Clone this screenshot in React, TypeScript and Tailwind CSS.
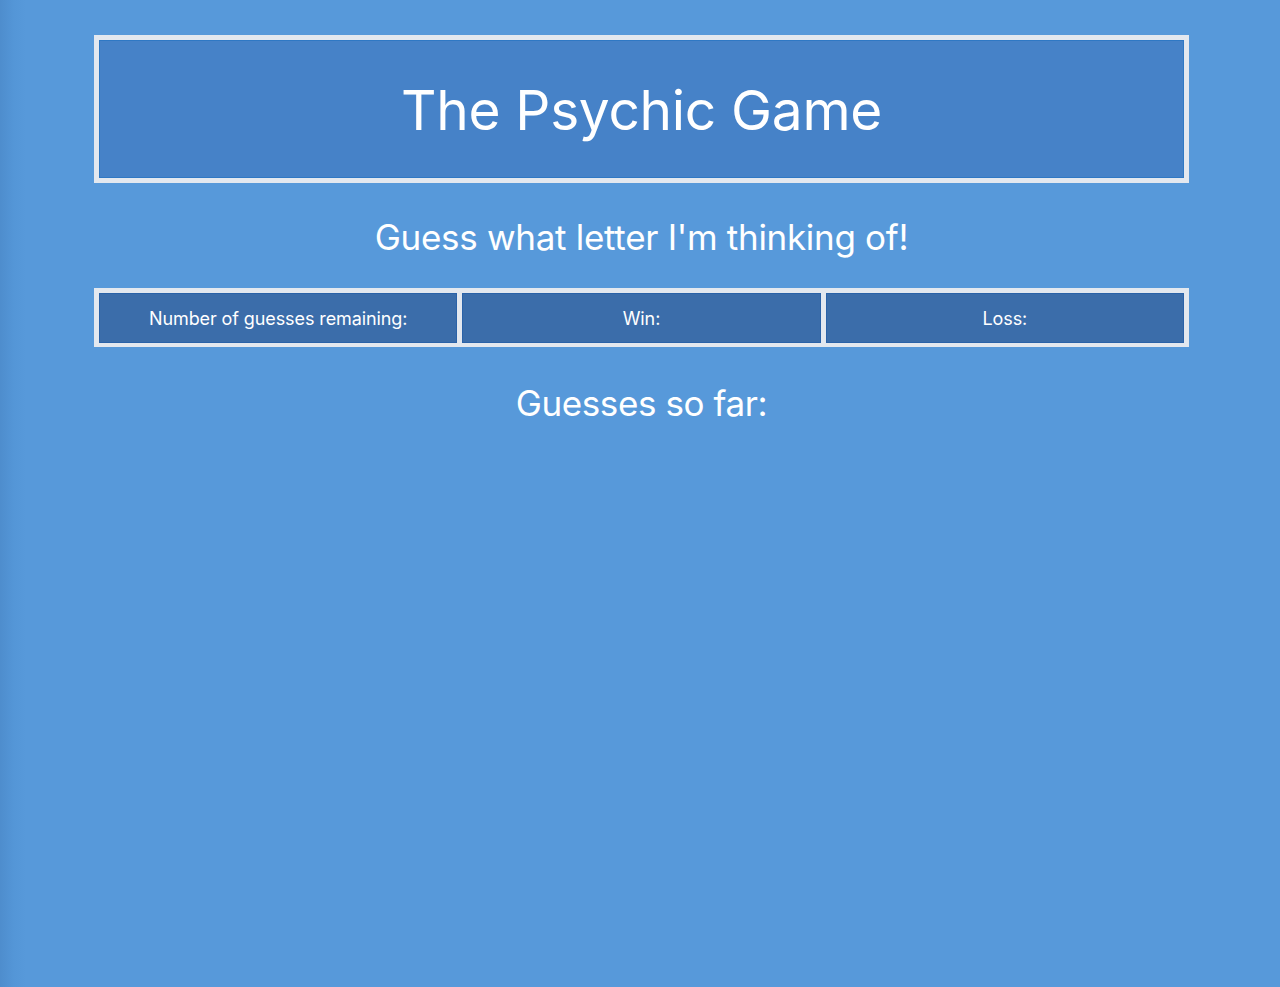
export default function App() {
  const cells = ["Number of guesses remaining:", "Win:", "Loss:"];
  return (
    <div
      className="min-h-[987px] w-full bg-[linear-gradient(to_right,#4e8dcd_0px,#5496d7_14px,#5799da_26px)] pt-[35px] text-white"
      style={{ fontFamily: "Inter, 'Noto Sans', sans-serif" }}
    >
      <div className="ml-[94px] w-[1095px]">
        <header className="border-[5px] border-[#e3e8ef] bg-[#e3e8ef]">
          <div className="flex h-[138px] items-center justify-center border border-[#2f78c4] bg-[#4682c8]">
            <h1 className="mt-[3px] text-[55px] font-normal tracking-[-0.3px]">The Psychic Game</h1>
          </div>
        </header>

        <h2 className="mt-[32px] text-center text-[35px] leading-[44px] tracking-[-0.3px]">
          Guess what letter I'm thinking of!
        </h2>

        <div className="mt-[29px] grid grid-cols-3 gap-[5px] border-[5px] border-b-[4px] border-[#e3e8ef] bg-[#e3e8ef]">
          {cells.map((c) => (
            <div
              key={c}
              className="flex h-[50px] items-center justify-center border border-[#2a62a8] bg-[#3b6daa] text-[18px] tracking-[-0.1px]"
            >
              {c}
            </div>
          ))}
        </div>

        <h2 className="mt-[34px] text-center text-[35px] leading-[44px] tracking-[-0.4px]">
          Guesses so far:
        </h2>
      </div>
    </div>
  );
}
